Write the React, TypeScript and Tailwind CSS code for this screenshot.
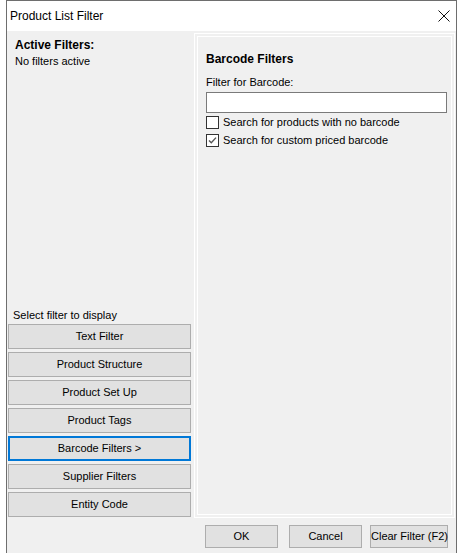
import * as React from 'react';

const font = { fontFamily: '"Liberation Sans", Arial, sans-serif' };

const filters = [
	'Text Filter',
	'Product Structure',
	'Product Set Up',
	'Product Tags',
	'Barcode Filters >',
	'Supplier Filters',
	'Entity Code',
];

function FilterButton({ label, active }: { label: string; active?: boolean }) {
	return (
		<button
			className={
				active
					? 'h-[25px] w-[183px] shrink-0 border-2 border-[#0078d7] bg-[#e1e1e1] text-[11px] text-black'
					: 'h-[25px] w-[183px] shrink-0 border border-[#adadad] bg-[#e1e1e1] text-[11px] text-black'
			}
		>
			{label}
		</button>
	);
}

function CheckBox({ checked, label }: { checked?: boolean; label: string }) {
	return (
		<label className="flex h-[18px] items-center gap-[4px] text-[11px] text-black">
			<span className="flex h-[13px] w-[13px] shrink-0 items-center justify-center border border-[#333] bg-white">
				{checked && (
					<svg width="11" height="11" viewBox="0 0 11 11">
						<path d="M2 5.5 L4.3 7.8 L9 2.6" fill="none" stroke="#555" strokeWidth="1.4" />
					</svg>
				)}
			</span>
			{label}
		</label>
	);
}

function DialogButton({ label, className }: { label: string; className: string }) {
	return (
		<button
			className={`h-[23px] shrink-0 whitespace-nowrap border border-[#adadad] bg-[#e1e1e1] text-[11px] text-black ${className}`}
		>
			{label}
		</button>
	);
}

export default function App() {
	return (
		<div className="h-[553px] w-[460px] overflow-hidden bg-white" style={font}>
			<div className="ml-[6px] flex h-[553px] w-[451px] flex-col border-x border-t border-[#6e6e6e]">
				{/* title bar */}
				<div className="flex h-[30px] shrink-0 items-center justify-between bg-white pl-[3px] pr-[6px]">
					<span className="text-[12px] text-black">Product List Filter</span>
					<svg width="12" height="12" viewBox="0 0 12 12">
						<path d="M0.5 0.5 L11.5 11.5 M11.5 0.5 L0.5 11.5" stroke="#111" strokeWidth="1" />
					</svg>
				</div>

				<div className="flex min-h-0 flex-1 bg-[#f0f0f0]">
					{/* left column */}
					<div className="flex w-[187px] shrink-0 flex-col pl-[1px]">
						<div className="pl-[7px] pt-[7px]">
							<div className="text-[12px] font-bold leading-[15px] text-black">Active Filters:</div>
							<div className="mt-[1px] text-[11px] leading-[15px] text-black">No filters active</div>
						</div>
						<div className="mt-auto pl-[5px] text-[11px] leading-[15px] text-black">Select filter to display</div>
						<div className="mb-[36px] mt-[1px] flex flex-col gap-[3px]">
							{filters.map((f) => (
								<FilterButton key={f} label={f} active={f.startsWith('Barcode')} />
							))}
						</div>
					</div>

					{/* right column */}
					<div className="flex min-w-0 flex-1 flex-col pr-[1px]">
						<div className="mt-[2px] h-[485px] shrink-0 border border-white p-[2px]">
							<div className="h-full border border-white px-[8px] pt-[15px]">
								<div className="text-[12px] font-bold leading-[15px] text-black">Barcode Filters</div>
								<div className="mt-[8px] text-[11px] leading-[15px] text-black">Filter for Barcode:</div>
								<div className="mt-[2px] h-[21px] w-[241px] border border-[#7a7a7a] bg-white" />
								<div className="flex flex-col">
									<CheckBox label="Search for products with no barcode" />
									<CheckBox checked label="Search for custom priced barcode" />
								</div>
							</div>
						</div>
						<div className="mt-[7px] flex items-start pl-[11px]">
							<DialogButton label="OK" className="w-[73px]" />
							<DialogButton label="Cancel" className="ml-[11px] w-[73px]" />
							<DialogButton label="Clear Filter (F2)" className="ml-[8px] w-[78px]" />
						</div>
					</div>
				</div>
			</div>
		</div>
	);
}
